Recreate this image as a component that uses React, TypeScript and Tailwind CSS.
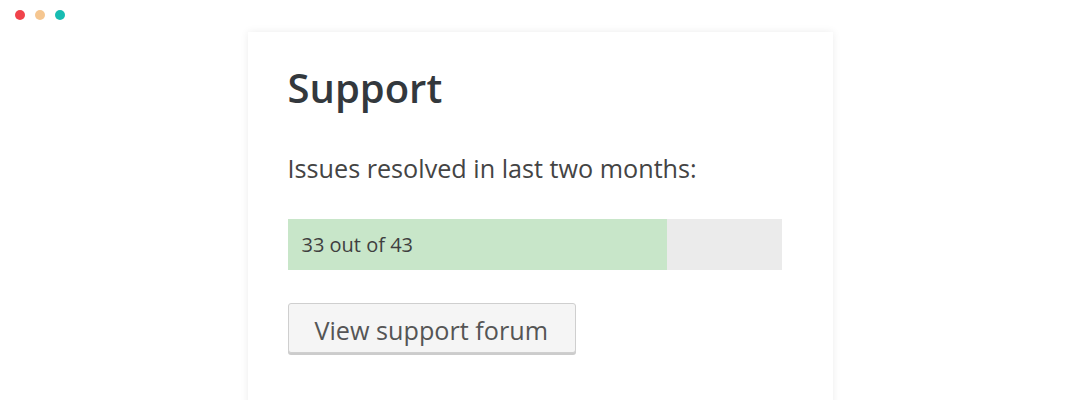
import React from 'react';

const resolved = 33;
const total = 43;

export default function App() {
  const pct = (resolved / total) * 100;

  return (
    <div className="h-[400px] flex flex-col bg-white font-['Open_Sans',sans-serif] overflow-hidden">
      {/* window dots */}
      <div className="flex gap-[10px] pt-[10px] pl-[15px]">
        <span className="w-[10px] h-[10px] rounded-full bg-[#f0434b]" />
        <span className="w-[10px] h-[10px] rounded-full bg-[#f5c690]" />
        <span className="w-[10px] h-[10px] rounded-full bg-[#17bcb2]" />
      </div>

      <div className="flex-1 mx-auto mt-[12px] -mb-[12px] w-[585px] bg-white shadow-[0_0_8px_rgba(0,0,0,0.08)] pl-[40px] pt-[32px]">
        <h1 className="text-[40px] leading-[48px] font-semibold text-[#33383d]">Support</h1>

        <p className="mt-[40px] text-[25.2px] leading-[32px] text-[#444]">
          Issues resolved in last two months:
        </p>

        <div className="mt-[35px] w-[494px] h-[51px] bg-[#ebebeb]">
          <div
            className="h-full bg-[#c8e6c9] flex items-center pl-[14px] text-[20px] leading-[30px] text-[#3f3f3f] whitespace-nowrap"
            style={{ width: `${pct}%` }}
          >
            {resolved} out of {total}
          </div>
        </div>

        <button className="mt-[33px] w-[288px] h-[50px] rounded-[3px] border border-[#cfcfcf] bg-[#f5f5f5] shadow-[0_2px_0_#cccccc] text-[25.2px] leading-[32px] text-[#555] text-left pl-[26px] pt-[3px]">
          View support forum
        </button>
      </div>
    </div>
  );
}
